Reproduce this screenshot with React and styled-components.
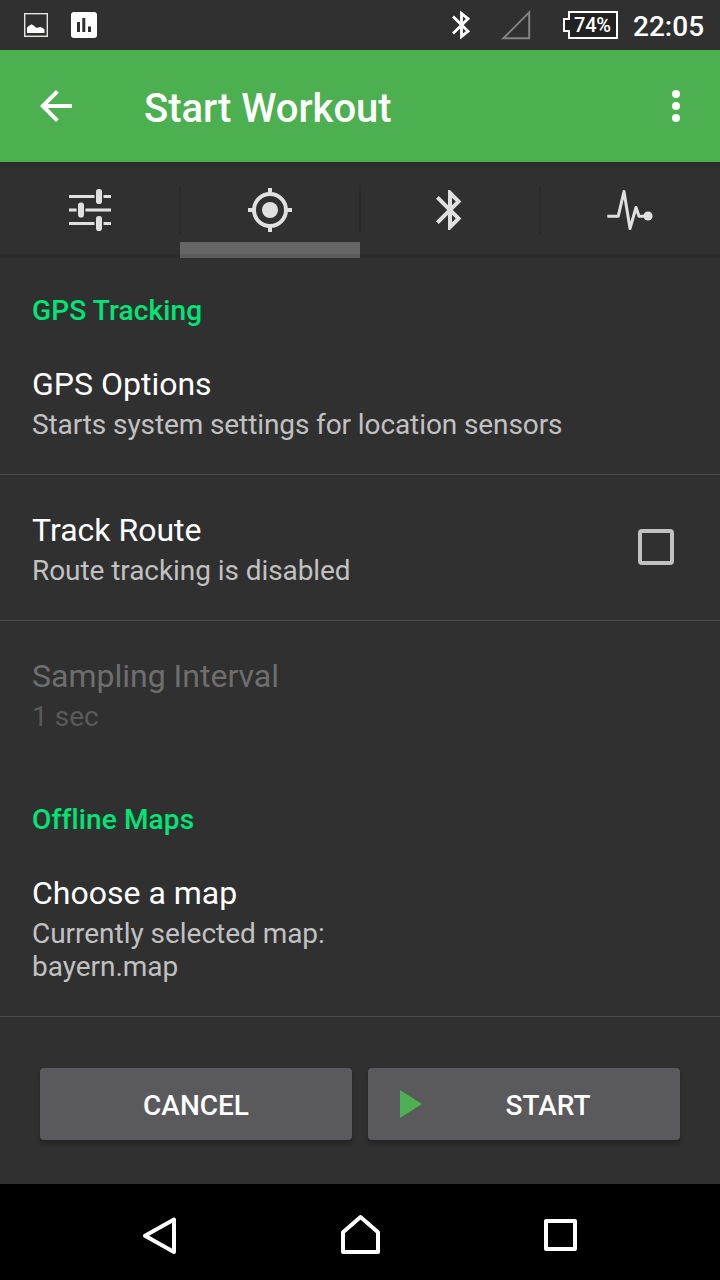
import React from "react";
import styled, { createGlobalStyle } from "styled-components";

const GlobalStyle = createGlobalStyle`
  * { box-sizing: border-box; }
  html, body { margin: 0; padding: 0; background: #000; }
  body { font-family: Roboto, "Noto Sans", sans-serif; font-variant-ligatures: none; }
  svg { display: block; flex: none; }
`;

const Screen = styled.div`
  width: 720px;
  height: 1280px;
  display: flex;
  flex-direction: column;
  overflow: hidden;
  background: #303030;
  color: #fff;
`;

const StatusBar = styled.header`
  height: 50px;
  flex: none;
  display: flex;
  align-items: center;
  justify-content: space-between;
  padding: 0 16px 0 24px;
  background: #303030;
`;

const StatusGroup = styled.div`
  display: flex;
  align-items: center;
  gap: ${(p) => p.$gap}px;
`;

const Battery = styled.div`
  display: grid;
  margin-left: 32px;
  margin-right: 15px;
  & > * { grid-area: 1 / 1; }
`;

const BatteryLevel = styled.span`
  padding-left: 11px;
  font-size: 20px;
  font-weight: 500;
  line-height: 28px;
  letter-spacing: -0.2px;
  white-space: nowrap;
`;

const Clock = styled.span`
  font-size: 28px;
  font-weight: 500;
  line-height: 34px;
  padding-top: 4px;
  width: 71px;
  white-space: nowrap;
`;

const AppBar = styled.div`
  height: 112px;
  flex: none;
  display: flex;
  align-items: center;
  padding: 0 40px;
  background: #4caf50;
`;

const Title = styled.h1`
  margin: 0 auto 0 72px;
  padding-top: 6px;
  font-size: 40px;
  font-weight: 500;
  line-height: 48px;
  letter-spacing: -0.04px;
  white-space: nowrap;
`;

const TabBar = styled.nav`
  height: 96px;
  flex: none;
  display: grid;
  grid-template-columns: repeat(4, 180px);
  background:
    linear-gradient(#29292a, #303030) 0 0 / 100% 7px no-repeat,
    linear-gradient(#2b2b2b, #2b2b2b) 0 92px / 100% 4px no-repeat,
    #303030;
`;

const Tab = styled.button`
  border: 0;
  margin: 0;
  padding: 0;
  display: flex;
  justify-content: center;
  align-items: center;
  color: #e0e0e0;
  background:
    ${(p) =>
      p.$active
        ? `linear-gradient(#666 0 12px, #5c5c5c 12px 16px) 0 80px / 100% 16px no-repeat,`
        : ""}
    linear-gradient(#2b2b2b, #2b2b2b) 0 24px / ${(p) => (p.$first ? 0 : 1)}px 48px no-repeat,
    linear-gradient(#2b2b2b, #2b2b2b) 100% 24px / ${(p) => (p.$last ? 0 : 1)}px 48px no-repeat;
`;

const Preferences = styled.main`
  flex: 1;
`;

const Category = styled.h2`
  margin: 0;
  height: 71px;
  padding: 36px 32px 0;
  font-size: 28px;
  font-weight: 500;
  line-height: 33px;
  letter-spacing: 0.14px;
  color: #00e676;
`;

const Preference = styled.div`
  display: flex;
  align-items: center;
  justify-content: space-between;
  padding: 36px 46px 33px 32px;
  border-bottom: 1px solid ${(p) => (p.$divider ? "#4a4a4a" : "transparent")};
`;

const PreferenceText = styled.div`
  display: flex;
  flex-direction: column;
  gap: 5px;
`;

const PreferenceTitle = styled.span`
  font-size: 32px;
  line-height: 38px;
  color: ${(p) => (p.$disabled ? "#6e6e6e" : "#fff")};
`;

const Summary = styled.span`
  font-size: 28px;
  line-height: 33px;
  letter-spacing: ${(p) => p.$tracking}px;
  white-space: pre-line;
  color: ${(p) => (p.$disabled ? "#5a5a5a" : "#c1c1c1")};
`;

const Checkbox = styled.span`
  width: 36px;
  height: 36px;
  margin-bottom: 4px;
  border: 4px solid #c1c1c1;
  border-radius: 4px;
`;

const Actions = styled.footer`
  flex: none;
  display: grid;
  grid-template-columns: 1fr 1fr;
  gap: 16px;
  padding: 0 40px 44px;
`;

const ActionButton = styled.button`
  height: 72px;
  border: 0;
  border-radius: 4px;
  padding: 0 ${(p) => (p.$hasIcon ? 6 : 32)}px 0 32px;
  display: flex;
  align-items: center;
  font: 500 28px/33px Roboto, sans-serif;
  color: #fff;
  background: #5a5a5c;
  box-shadow: 0 3px 4px rgba(0, 0, 0, 0.3);
`;

const ActionLabel = styled.span`
  flex: 1;
  padding-top: 2px;
  text-align: center;
`;

const NavBar = styled.nav`
  height: 96px;
  flex: none;
  display: grid;
  grid-template-columns: repeat(3, 200px);
  justify-content: center;
  align-items: center;
  justify-items: center;
  padding-top: 4px;
  background: #000;
`;

const ImageIcon = () => (
  <svg width="24" height="24" viewBox="0 0 24 24">
    <rect x="0.7" y="0.7" width="22.6" height="22.6" fill="none" stroke="#e4e4e0" strokeWidth="1.4" />
    <path
      d="M3 20V14.5Q4 14 5 12.8L7.5 11.3L10 12.8Q12 15.5 14 14.6L16 14L18.5 14.8Q19.5 16 20.5 16.5V20Z"
      fill="#fff"
    />
  </svg>
);

const ChartIcon = () => (
  <svg width="26" height="26" viewBox="0 0 26 26">
    <rect width="26" height="26" rx="3" fill="#fff" />
    <path d="M6 10h3v10H6zM11.3 6h3v14h-3zM17 14.5h3V20h-3z" fill="#303030" />
  </svg>
);

const StatusBluetoothIcon = () => (
  <svg width="18" height="30" viewBox="0 0 18 30">
    <path d="M1 6.5L16 21.2L9.5 26.5V3.5L16 8.8L1 23.5" fill="none" stroke="#fff" strokeWidth="2.8" />
  </svg>
);

const SignalIcon = () => (
  <svg width="30" height="30" viewBox="0 0 30 30">
    <path d="M2.4 28.2H28.2V2.4Z" fill="none" stroke="#838383" strokeWidth="2" />
  </svg>
);

const BatteryIcon = () => (
  <svg width="55" height="28" viewBox="0 0 55 28">
    <path d="M6 1H54V27H6V20H1V8H6Z" fill="#212121" stroke="#fff" strokeWidth="2" />
  </svg>
);

const BackArrowIcon = () => (
  <svg width="32" height="32" viewBox="0 0 32 32">
    <path d="M17.4 1.4L2.8 16L17.4 30.6M2.8 16H32" fill="none" stroke="#fff" strokeWidth="4" />
  </svg>
);

const MoreIcon = () => (
  <svg width="8" height="32" viewBox="0 0 8 32">
    <circle cx="4" cy="4" r="4" fill="#fff" />
    <circle cx="4" cy="16" r="4" fill="#fff" />
    <circle cx="4" cy="28" r="4" fill="#fff" />
  </svg>
);

const SlidersIcon = () => (
  <svg width="44" height="44" viewBox="0 0 44 44" fill="currentColor">
    <path d="M1 7h25.5v3H1zM35.5 7H43v3h-7.5zM1 34h25.5v3H1zM35.5 34H43v3h-7.5z" />
    <path d="M1 20h7.5v4H1zM17.5 20H43v4H17.5z" fill="#8e8e8e" />
    <path d="M1 21h7.5v2H1zM17.5 21H43v2H17.5z" />
    <rect x="28" y="1" width="6" height="15" rx="2.8" />
    <rect x="10" y="14.5" width="6" height="15" rx="2.8" />
    <rect x="28" y="28" width="6" height="15" rx="2.8" />
  </svg>
);

const TargetIcon = () => (
  <svg width="44" height="44" viewBox="0 0 44 44">
    <circle cx="22" cy="22" r="16" fill="none" stroke="currentColor" strokeWidth="4" />
    <circle cx="22" cy="22" r="8" fill="currentColor" />
    <path d="M22 0V5M22 39V44M0 22H5M39 22H44" stroke="currentColor" strokeWidth="4" />
  </svg>
);

const BluetoothIcon = () => (
  <svg width="48" height="48" viewBox="0 0 24 24" fill="currentColor">
    <path d="M17.71 7.71L12 2h-1v7.59L6.41 5 5 6.41 10.59 12 5 17.59 6.41 19 11 14.41V22h1l5.71-5.71-4.3-4.29 4.3-4.29zM13 5.83l1.88 1.88L13 9.59V5.83zm1.88 10.46L13 18.17v-3.76l1.88 1.88z" />
  </svg>
);

const PulseIcon = () => (
  <svg width="46" height="44" viewBox="0 0 46 44">
    <path
      d="M0.3 28.3H11.2L17 3.5L23 40.5L29 19.5L32 28.3H40"
      fill="none"
      stroke="currentColor"
      strokeWidth="3"
      strokeLinejoin="round"
    />
    <circle cx="41" cy="28" r="4.6" fill="currentColor" />
  </svg>
);

const PlayIcon = () => (
  <svg width="22" height="28" viewBox="0 0 22 28">
    <path d="M0 0L22 14L0 28Z" fill="#4caf50" />
  </svg>
);

const NavIcon = ({ d }) => (
  <svg width="48" height="48" viewBox="0 0 48 48">
    <path d={d} fill="none" stroke="#fff" strokeWidth="4" strokeLinejoin="round" />
  </svg>
);

const tabs = [SlidersIcon, TargetIcon, BluetoothIcon, PulseIcon];

function PreferenceItem({ title, summary, disabled, divider = true, tracking = 0, children }) {
  return (
    <Preference $divider={divider}>
      <PreferenceText>
        <PreferenceTitle $disabled={disabled}>{title}</PreferenceTitle>
        <Summary $disabled={disabled} $tracking={tracking}>
          {summary}
        </Summary>
      </PreferenceText>
      {children}
    </Preference>
  );
}

export default function App() {
  return (
    <Screen>
      <GlobalStyle />
      <StatusBar>
        <StatusGroup $gap={23}>
          <ImageIcon />
          <ChartIcon />
        </StatusGroup>
        <StatusGroup $gap={0}>
          <StatusGroup $gap={31}>
            <StatusBluetoothIcon />
            <SignalIcon />
          </StatusGroup>
          <Battery>
            <BatteryIcon />
            <BatteryLevel>74%</BatteryLevel>
          </Battery>
          <Clock>22:05</Clock>
        </StatusGroup>
      </StatusBar>
      <AppBar>
        <BackArrowIcon />
        <Title>Start Workout</Title>
        <MoreIcon />
      </AppBar>
      <TabBar>
        {tabs.map((Icon, i) => (
          <Tab key={i} $active={i === 1} $first={i === 0} $last={i === 3}>
            <Icon />
          </Tab>
        ))}
      </TabBar>
      <Preferences>
        <Category>GPS Tracking</Category>
        <PreferenceItem
          title="GPS Options"
          summary="Starts system settings for location sensors"
          tracking={-0.1}
        />
        <PreferenceItem title="Track Route" summary="Route tracking is disabled" tracking={-0.07}>
          <Checkbox />
        </PreferenceItem>
        <PreferenceItem title="Sampling Interval" summary="1 sec" disabled divider={false} />
        <Category>Offline Maps</Category>
        <PreferenceItem
          title="Choose a map"
          summary={"Currently selected map:\nbayern.map"}
          tracking={-0.03}
        />
      </Preferences>
      <Actions>
        <ActionButton>
          <ActionLabel>CANCEL</ActionLabel>
        </ActionButton>
        <ActionButton $hasIcon>
          <PlayIcon />
          <ActionLabel>START</ActionLabel>
        </ActionButton>
      </Actions>
      <NavBar>
        <NavIcon d="M38 9.5V42L9 25.7Z" />
        <NavIcon d="M7 22.3L24.5 7L42 22.3V42H7Z" />
        <NavIcon d="M10 11H39V39H10Z" />
      </NavBar>
    </Screen>
  );
}
